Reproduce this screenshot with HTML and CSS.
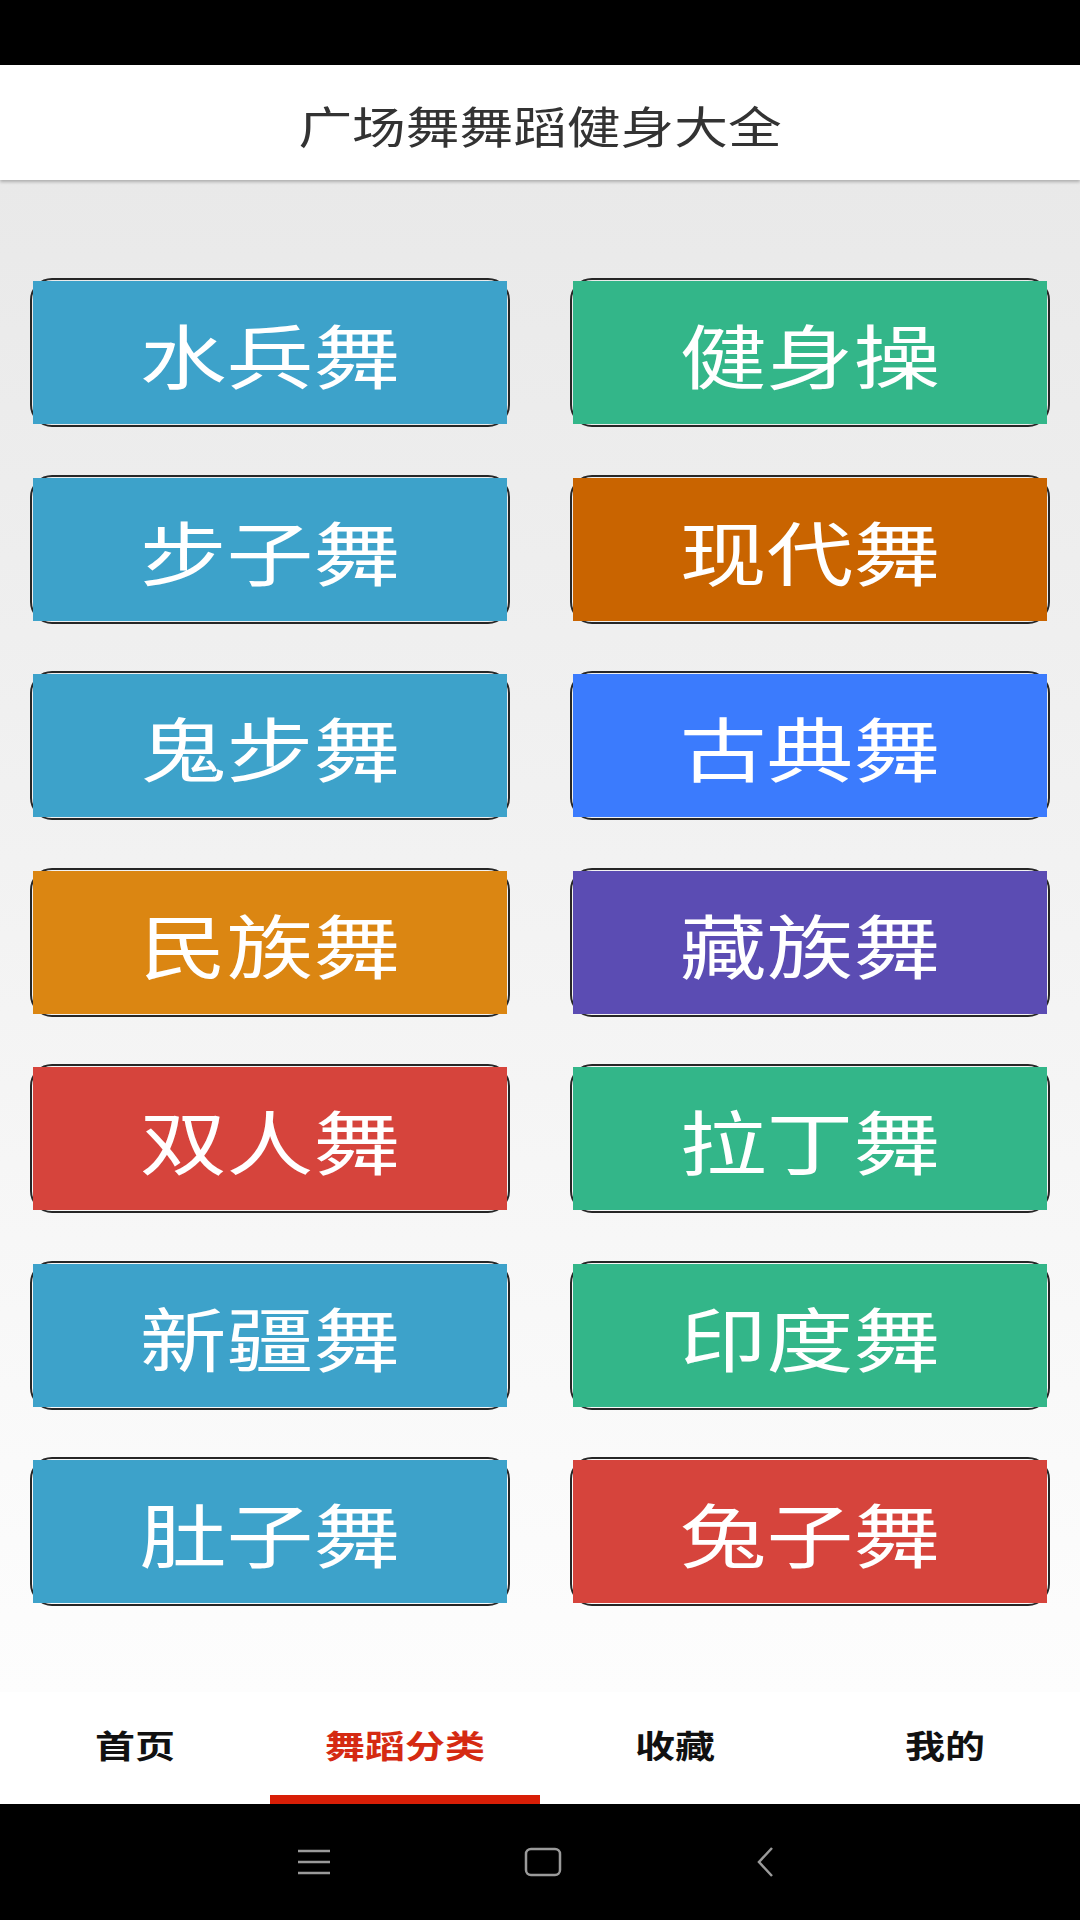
FILE: index.html
```html
<!DOCTYPE html>
<html lang="zh-CN">
<head>
    <meta charset="UTF-8">
    <title>广场舞舞蹈健身大全</title>
    <link rel="stylesheet" href="styles.css">
</head>
<body>
<div class="phone">
    <div class="status-bar"></div>

    <div class="header">
        <span class="title">广场舞舞蹈健身大全</span>
    </div>

    <div class="content">
        <ul class="cats">
            <li class="cat"><div class="fill c-blue"><span>水兵舞</span></div></li>
            <li class="cat"><div class="fill c-green"><span>健身操</span></div></li>
            <li class="cat"><div class="fill c-blue"><span>步子舞</span></div></li>
            <li class="cat"><div class="fill c-brown"><span>现代舞</span></div></li>
            <li class="cat"><div class="fill c-blue"><span>鬼步舞</span></div></li>
            <li class="cat"><div class="fill c-sky"><span>古典舞</span></div></li>
            <li class="cat"><div class="fill c-orange"><span>民族舞</span></div></li>
            <li class="cat"><div class="fill c-purple"><span>藏族舞</span></div></li>
            <li class="cat"><div class="fill c-red"><span>双人舞</span></div></li>
            <li class="cat"><div class="fill c-green"><span>拉丁舞</span></div></li>
            <li class="cat"><div class="fill c-blue"><span>新疆舞</span></div></li>
            <li class="cat"><div class="fill c-green"><span>印度舞</span></div></li>
            <li class="cat"><div class="fill c-blue"><span>肚子舞</span></div></li>
            <li class="cat"><div class="fill c-red"><span>兔子舞</span></div></li>
        </ul>
    </div>

    <div class="tabs">
        <div class="tab"><span>首页</span></div>
        <div class="tab active"><span>舞蹈分类</span></div>
        <div class="tab"><span>收藏</span></div>
        <div class="tab"><span>我的</span></div>
    </div>

    <div class="nav-bar">
        <svg class="nav-icon" width="36" height="26" viewBox="0 0 36 26">
            <path d="M2 2H34M2 13H34M2 24H34" stroke="#9a9a9a" stroke-width="2.5" fill="none"/>
        </svg>
        <svg class="nav-icon" width="38" height="30" viewBox="0 0 38 30">
            <rect x="2" y="2" width="34" height="26" rx="5" stroke="#9a9a9a" stroke-width="2.5" fill="none"/>
        </svg>
        <svg class="nav-icon" width="22" height="32" viewBox="0 0 22 32">
            <path d="M18 2L5 16L18 30" stroke="#9a9a9a" stroke-width="2.5" fill="none"/>
        </svg>
    </div>
</div>
</body>
</html>
```

FILE: styles.css
```css
body, ul, li {
    margin: 0;
    padding: 0;
    list-style: none;
}

body {
    font-family: "Noto Sans CJK SC", "Noto Sans", sans-serif;
    background: #000;
}

.phone {
    width: 1080px;
    height: 1920px;
    display: flex;
    flex-direction: column;
    overflow: hidden;
}

.status-bar {
    height: 65px;
    background: #000;
}

.header {
    height: 115px;
    background: #fff;
    display: flex;
    align-items: center;
    justify-content: center;
    position: relative;
    z-index: 2;
    box-shadow: 0 2px 3px rgba(0, 0, 0, 0.25);
}

.title {
    display: inline-block;
    font-size: 44px;
    color: #333;
    transform: scaleX(1.22);
    margin-top: 4px;
}

.content {
    flex: 1;
    background: linear-gradient(#e9e9e9, #fdfdfd);
}

.cats {
    display: grid;
    grid-template-columns: 1fr 1fr;
    column-gap: 60px;
    row-gap: 47.5px;
    padding: 98px 30px 0;
}

.cat {
    height: 149px;
    box-sizing: border-box;
    border: 2px solid #262626;
    border-radius: 22px;
    padding: 1px 1px;
}

.fill {
    height: 143px;
    display: flex;
    align-items: center;
    justify-content: center;
}

.fill span {
    display: inline-block;
    font-size: 70px;
    color: #fff;
    transform: scaleX(1.24);
    margin-top: 2px;
}

.c-blue { background: #3da2ca; }
.c-green { background: #33b689; }
.c-brown { background: #c96400; }
.c-sky { background: #3b7bfd; }
.c-orange { background: #db8612; }
.c-purple { background: #5b4cb3; }
.c-red { background: #d6443c; }

.tabs {
    height: 112px;
    background: #fff;
    display: flex;
}

.tab {
    flex: 1;
    display: flex;
    align-items: center;
    justify-content: center;
    padding-top: 1px;
    box-sizing: border-box;
    border-bottom: 9px solid transparent;
}

.tab span {
    display: inline-block;
    font-size: 32px;
    font-weight: bold;
    color: #111;
    transform: scaleX(1.25);
}

.tab.active {
    border-bottom-color: #d81e06;
}

.tab.active span {
    color: #d52a12;
}

.nav-bar {
    height: 116px;
    background: #000;
    display: flex;
    align-items: center;
    justify-content: center;
    gap: 192px;
    padding-right: 8px;
}
```
